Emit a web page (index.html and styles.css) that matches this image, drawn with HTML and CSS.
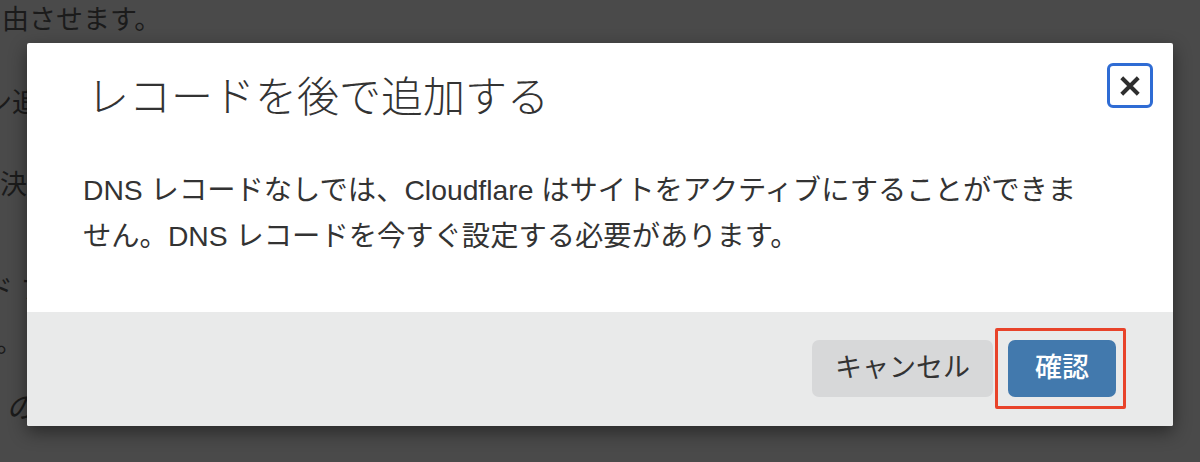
FILE: index.html
```html
<!DOCTYPE html>
<html lang="ja">
<head>
<meta charset="utf-8">
<title>レコードを後で追加する</title>
<link rel="stylesheet" href="styles.css">
</head>
<body>
<div class="page">
  <p class="bg-line l1">由させます。</p>
  <p class="bg-line l2">ン追</p>
  <p class="bg-line l3">決め</p>
  <p class="bg-line l4">ド ブ</p>
  <p class="bg-line l5">。</p>
  <p class="bg-line l6">の</p>
</div>

<div class="modal" role="dialog" aria-labelledby="modal-title">
  <div class="modal-header">
    <h2 class="modal-title" id="modal-title">レコードを後で追加する</h2>
    <button class="close-btn" aria-label="閉じる">
      <svg width="24" height="24" viewBox="0 0 24 24" aria-hidden="true">
        <path d="M3 3 L21 21 M21 3 L3 21" stroke="#2e2e2e" stroke-width="4.4" stroke-linecap="butt" fill="none"/>
      </svg>
    </button>
  </div>
  <p class="modal-body">DNS レコードなしでは、Cloudflare はサイトをアクティブにすることができま<br>せん。DNS レコードを今すぐ設定する必要があります。</p>
  <div class="modal-footer">
    <button class="btn btn-cancel">キャンセル</button>
    <button class="btn btn-confirm">確認</button>
  </div>
</div>
</body>
</html>
```

FILE: styles.css
```css
html, body {
  margin: 0;
  padding: 0;
}

body {
  width: 1200px;
  height: 462px;
  overflow: hidden;
  background: #4a4a4a;
  font-family: "Liberation Sans", "Noto Sans CJK JP", sans-serif;
  position: relative;
}

.page {
  display: flex;
  flex-direction: column;
  color: #1b1b1b;
  font-size: 27px;
  line-height: 46px;
}

.bg-line {
  margin: 0;
  white-space: nowrap;
}

.l1 { margin-top: -3px; margin-left: 2px; }
.l2 { margin-top: 37px; margin-left: -15px; }
.l3 { margin-top: 36px; margin-left: 0; }
.l4 { margin-top: 59px; margin-left: -14px; }
.l5 { margin-top: 7px; margin-left: -4px; }
.l6 { margin-top: 19px; margin-left: 6px; font-style: italic; font-size: 30px; }

.modal {
  position: absolute;
  left: 27px;
  top: 43px;
  width: 1146px;
  background: #ffffff;
  border-radius: 2px;
  box-shadow: 0 6px 18px rgba(0, 0, 0, 0.45);
  color: #333333;
}

.modal-header {
  display: flex;
  justify-content: space-between;
  align-items: flex-start;
  padding: 20px 20px 0 60px;
}

.modal-title {
  margin: 10px 0 0;
  font-size: 42px;
  line-height: 50px;
  font-weight: 300;
  color: #333333;
}

.close-btn {
  width: 46px;
  height: 45px;
  padding: 0;
  border: 3px solid #2f6cd4;
  border-radius: 6px;
  background: #ffffff;
  display: flex;
  align-items: center;
  justify-content: center;
  cursor: pointer;
}

.close-btn svg {
  width: 22px;
  height: 22px;
  display: block;
}

.modal-body {
  margin: 44px 0 0;
  padding: 0 20px 53px 56px;
  font-size: 28.3px;
  line-height: 46px;
  color: #333333;
}

.modal-footer {
  display: flex;
  justify-content: flex-end;
  gap: 15px;
  padding: 28px 57px 29px;
  background: #e9eaea;
  border-radius: 0 0 2px 2px;
}

.btn {
  height: 57px;
  border: none;
  border-radius: 7px;
  font-family: "Liberation Sans", "Noto Sans CJK JP", sans-serif;
  font-size: 27px;
  line-height: 57px;
  cursor: pointer;
}

.btn-cancel {
  padding: 0 23px;
  background: #d7d8d9;
  color: #333333;
}

.btn-confirm {
  position: relative;
  padding: 0 27px;
  background: #4279ad;
  color: #ffffff;
  font-weight: 500;
}

.btn-confirm::after {
  content: "";
  position: absolute;
  top: -12px;
  bottom: -12px;
  left: -13px;
  right: -10px;
  border: 3px solid #e8432a;
  border-radius: 2px;
  pointer-events: none;
}
```
